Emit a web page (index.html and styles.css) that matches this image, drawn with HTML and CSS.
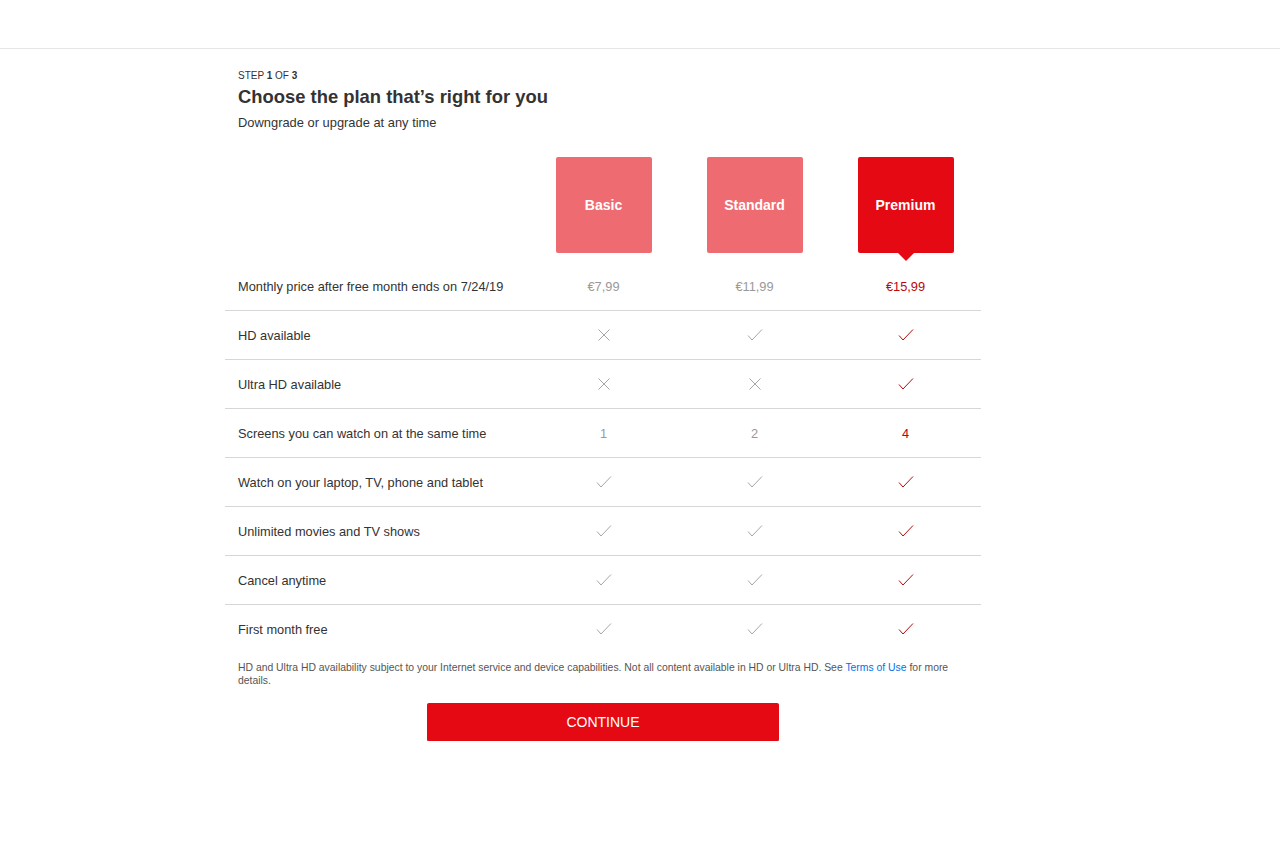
FILE: index.html
```html
<!DOCTYPE html>
<html lang="en">
<head>
<meta charset="utf-8">
<title>Choose the plan</title>
<link rel="stylesheet" href="styles.css">
</head>
<body>
<div class="header"></div>
<div class="container">
  <div class="intro">
    <div class="step">STEP <b>1</b> OF <b>3</b></div>
    <h1 class="title">Choose the plan that’s right for you</h1>
    <div class="subtitle">Downgrade or upgrade at any time</div>
  </div>

  <div class="plans">
    <div class="plan-spacer"></div>
    <div class="plan-cell"><div class="plan">Basic</div></div>
    <div class="plan-cell"><div class="plan">Standard</div></div>
    <div class="plan-cell"><div class="plan selected">Premium</div></div>
  </div>

  <div class="row">
    <div class="label">Monthly price after free month ends on 7/24/19</div>
    <div class="val">€7,99</div>
    <div class="val">€11,99</div>
    <div class="val on">€15,99</div>
  </div>
  <div class="row">
    <div class="label">HD available</div>
    <div class="val"><svg class="ic" viewBox="0 0 14 14"><path d="M1.5 1.5L12.5 12.5M12.5 1.5L1.5 12.5"/></svg></div>
    <div class="val"><svg class="ic" viewBox="0 0 16 14"><path d="M1 7.5L5 12L15 1.5"/></svg></div>
    <div class="val on"><svg class="ic" viewBox="0 0 16 14"><path d="M1 7.5L5 12L15 1.5"/></svg></div>
  </div>
  <div class="row">
    <div class="label">Ultra HD available</div>
    <div class="val"><svg class="ic" viewBox="0 0 14 14"><path d="M1.5 1.5L12.5 12.5M12.5 1.5L1.5 12.5"/></svg></div>
    <div class="val"><svg class="ic" viewBox="0 0 14 14"><path d="M1.5 1.5L12.5 12.5M12.5 1.5L1.5 12.5"/></svg></div>
    <div class="val on"><svg class="ic" viewBox="0 0 16 14"><path d="M1 7.5L5 12L15 1.5"/></svg></div>
  </div>
  <div class="row">
    <div class="label">Screens you can watch on at the same time</div>
    <div class="val">1</div>
    <div class="val">2</div>
    <div class="val on strong">4</div>
  </div>
  <div class="row">
    <div class="label">Watch on your laptop, TV, phone and tablet</div>
    <div class="val"><svg class="ic" viewBox="0 0 16 14"><path d="M1 7.5L5 12L15 1.5"/></svg></div>
    <div class="val"><svg class="ic" viewBox="0 0 16 14"><path d="M1 7.5L5 12L15 1.5"/></svg></div>
    <div class="val on"><svg class="ic" viewBox="0 0 16 14"><path d="M1 7.5L5 12L15 1.5"/></svg></div>
  </div>
  <div class="row">
    <div class="label">Unlimited movies and TV shows</div>
    <div class="val"><svg class="ic" viewBox="0 0 16 14"><path d="M1 7.5L5 12L15 1.5"/></svg></div>
    <div class="val"><svg class="ic" viewBox="0 0 16 14"><path d="M1 7.5L5 12L15 1.5"/></svg></div>
    <div class="val on"><svg class="ic" viewBox="0 0 16 14"><path d="M1 7.5L5 12L15 1.5"/></svg></div>
  </div>
  <div class="row">
    <div class="label">Cancel anytime</div>
    <div class="val"><svg class="ic" viewBox="0 0 16 14"><path d="M1 7.5L5 12L15 1.5"/></svg></div>
    <div class="val"><svg class="ic" viewBox="0 0 16 14"><path d="M1 7.5L5 12L15 1.5"/></svg></div>
    <div class="val on"><svg class="ic" viewBox="0 0 16 14"><path d="M1 7.5L5 12L15 1.5"/></svg></div>
  </div>
  <div class="row last">
    <div class="label">First month free</div>
    <div class="val"><svg class="ic" viewBox="0 0 16 14"><path d="M1 7.5L5 12L15 1.5"/></svg></div>
    <div class="val"><svg class="ic" viewBox="0 0 16 14"><path d="M1 7.5L5 12L15 1.5"/></svg></div>
    <div class="val on"><svg class="ic" viewBox="0 0 16 14"><path d="M1 7.5L5 12L15 1.5"/></svg></div>
  </div>

  <p class="disclaimer">HD and Ultra HD availability subject to your Internet service and device capabilities. Not all content available in HD or Ultra HD. See <a href="#">Terms of Use</a> for more<br>details.</p>

  <div class="actions">
    <button class="continue" type="button">CONTINUE</button>
  </div>
</div>
</body>
</html>
```

FILE: styles.css
```css
html, body {
  margin: 0;
  padding: 0;
  background: #fff;
}
body {
  font-family: "Liberation Sans", Arial, Helvetica, sans-serif;
  color: #333;
}
.header {
  height: 48px;
  border-bottom: 1px solid #e6e6e6;
}
.container {
  width: 756px;
  margin-left: 225px;
}
.intro {
  padding-left: 13px;
}
.step {
  margin-top: 21px;
  font-size: 10px;
  line-height: 12px;
  color: #333;
}
.step b {
  font-weight: bold;
}
.title {
  margin: 3px 0 0;
  font-size: 18.4px;
  line-height: 24px;
  font-weight: bold;
  color: #333;
}
.subtitle {
  margin-top: 6px;
  font-size: 12.9px;
  line-height: 16px;
}
.plans {
  display: grid;
  grid-template-columns: 303px repeat(3, 151px);
  margin-top: 26px;
  height: 105px;
}
.plan-cell {
  display: flex;
  justify-content: center;
}
.plan {
  position: relative;
  width: 96px;
  height: 96px;
  border-radius: 2px;
  background: #ef6b72;
  color: #fff;
  font-size: 14px;
  font-weight: bold;
  display: flex;
  align-items: center;
  justify-content: center;
}
.plan.selected {
  background: #e50914;
}
.plan.selected::after {
  content: "";
  position: absolute;
  left: 50%;
  top: 100%;
  margin-left: -8px;
  border-left: 8px solid transparent;
  border-right: 8px solid transparent;
  border-top: 8px solid #e50914;
}
.row {
  display: grid;
  grid-template-columns: 303px repeat(3, 151px);
  height: 48px;
  align-items: center;
  border-bottom: 1px solid #d6d6d6;
  font-size: 12.8px;
}
.row.last {
  border-bottom: none;
}
.label {
  padding-left: 13px;
  color: #333;
}
.val {
  text-align: center;
  color: #999;
  display: flex;
  justify-content: center;
  align-items: center;
}
.val.on {
  color: #b9090b;
}
.ic {
  width: 16px;
  height: 14px;
  fill: none;
  stroke: #a6a6a6;
  stroke-width: 1;
}
.val.on .ic {
  stroke: #b9090b;
}
.disclaimer {
  margin: 9px 0 0;
  padding-left: 13px;
  padding-right: 20px;
  font-size: 10.4px;
  line-height: 12.5px;
  color: #555;
}
.disclaimer a {
  color: #0071eb;
  text-decoration: none;
}
.actions {
  display: flex;
  justify-content: center;
  margin-top: 16px;
}
.continue {
  width: 352px;
  height: 38px;
  border: none;
  border-radius: 2px;
  background: #e50914;
  color: #fff;
  font-family: "Liberation Sans", Arial, sans-serif;
  font-size: 14px;
  box-shadow: 0 1px 0 rgba(0,0,0,.45);
  padding: 0;
}
```
